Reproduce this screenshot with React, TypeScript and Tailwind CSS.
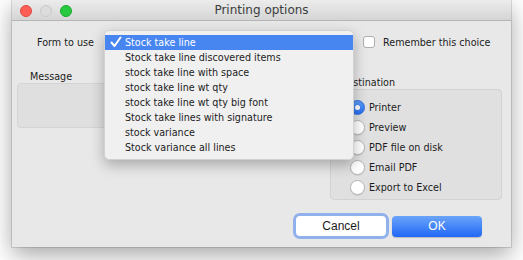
const MENU_ITEMS = [
  "Stock take line",
  "Stock take line discovered items",
  "stock take line with space",
  "stock take line wt qty",
  "stock take line wt qty big font",
  "Stock take lines with signature",
  "stock variance",
  "Stock variance all lines",
];

const DESTINATIONS = ["Printer", "Preview", "PDF file on disk", "Email PDF", "Export to Excel"];

function TrafficLights() {
  return (
    <div className="absolute left-[8px] top-[5px] flex gap-[8px]">
      <span className="h-[12px] w-[12px] rounded-full border border-[#e2463f] bg-[#fd5f57]" />
      <span className="h-[12px] w-[12px] rounded-full border border-[#c9c9c9] bg-[#dcdcdc]" />
      <span className="h-[12px] w-[12px] rounded-full border border-[#1aab29] bg-[#28c840]" />
    </div>
  );
}

function CheckMark() {
  return (
    <svg width="12" height="12" viewBox="0 0 12 12" fill="none">
      <path
        d="M1.5 6.5 L4.5 10 L10.5 1.5"
        stroke="white"
        strokeWidth="2"
        strokeLinecap="round"
        strokeLinejoin="round"
      />
    </svg>
  );
}

function Radio({ checked }: { checked: boolean }) {
  if (checked) {
    return (
      <span className="flex h-[15px] w-[15px] items-center justify-center rounded-full border border-[#2c6ee0] bg-gradient-to-b from-[#5d9bf8] to-[#2a6ef2]">
        <span className="h-[5px] w-[5px] rounded-full bg-white" />
      </span>
    );
  }
  return (
    <span className="h-[15px] w-[15px] rounded-full border border-[#b4b4b4] bg-white shadow-[0_1px_1px_rgba(0,0,0,0.08)]" />
  );
}

function PopupMenu() {
  return (
    <div className="absolute left-[92px] top-[30px] w-[250px] rounded-[5px] border border-[#d2d2d2] bg-[#f0f0f0] py-[4px] shadow-[0_5px_14px_rgba(0,0,0,0.28)]">
      {MENU_ITEMS.map((item, index) => {
        const isSelected = index === 0;
        return (
          <div
            key={item}
            className={
              isSelected
                ? "relative flex h-[15px] items-center bg-[#4785f0] pl-[20px] text-white"
                : "relative flex h-[15px] items-center pl-[20px] text-[#1c1c1c]"
            }
          >
            {isSelected ? (
              <span className="absolute left-[5px] top-[1px]">
                <CheckMark />
              </span>
            ) : null}
            {item}
          </div>
        );
      })}
    </div>
  );
}

export default function App() {
  return (
    <div className="h-[260px] w-[523px] overflow-hidden bg-white font-['DejaVu_Sans',sans-serif] text-[9.6px] leading-[13px] text-[#1c1c1c]">
      <div className="relative ml-[12px] h-[247px] w-[499px] bg-[#e8e8e8] shadow-[0_0_0_1px_rgba(0,0,0,0.12),0_8px_22px_rgba(0,0,0,0.35)]">
        <div className="relative flex h-[21px] items-center justify-center border-b border-[#b5b5b5] bg-gradient-to-b from-[#ececec] to-[#d5d5d5]">
          <TrafficLights />
          <span className="text-[12px] text-[#3c3c3c]">Printing options</span>
        </div>

        <div className="mt-[12px] flex h-[18px] items-center">
          <div className="w-[351px] pl-[25px]">Form to use</div>
          <span className="h-[12px] w-[12px] rounded-[3px] border border-[#aeaeae] bg-white" />
          <span className="ml-[8px]">Remember this choice</span>
        </div>

        <div className="flex">
          <div className="w-[318px] pl-[5px] pt-[19px]">
            <div className="h-[13px] pl-[13px]">Message</div>
            <div className="h-[45px] w-[301px] rounded-[4px] border border-[#d4d4d4] bg-[#dfdfdf]" />
          </div>
          <div className="w-[172px] pt-[25px]">
            <div className="h-[13px] pl-[10px]">Destination</div>
            <div className="h-[111px] rounded-[4px] border border-[#d2d2d2] bg-[#e0e0e0] pl-[19px] pt-[7px]">
              {DESTINATIONS.map((name, index) => (
                <div key={name} className="flex h-[20px] items-center gap-[4px]">
                  <Radio checked={index === 0} />
                  <span>{name}</span>
                </div>
              ))}
            </div>
          </div>
        </div>

        <div className="mt-[16px] flex justify-end gap-[6px] pr-[29px] font-['Liberation_Sans',sans-serif] text-[12px]">
          <button
            type="button"
            className="flex h-[20px] w-[90px] items-center justify-center rounded-[4px] bg-white text-[#1c1c1c] shadow-[0_0_0_3px_rgba(72,132,240,0.55)]"
          >
            Cancel
          </button>
          <button
            type="button"
            className="flex h-[21px] w-[90px] items-center justify-center rounded-[4px] bg-gradient-to-b from-[#6aa4f9] to-[#2166f5] text-white shadow-[0_1px_1px_rgba(0,0,0,0.2)]"
          >
            OK
          </button>
        </div>

        <PopupMenu />
      </div>
    </div>
  );
}
